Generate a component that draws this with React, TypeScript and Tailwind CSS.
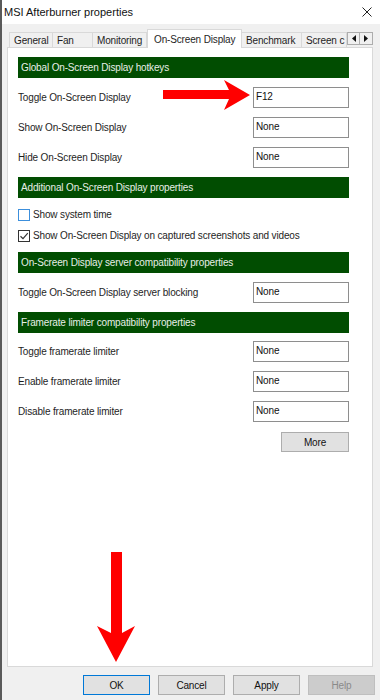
const hotkeys = [
  { label: "Toggle On-Screen Display", value: "F12" },
  { label: "Show On-Screen Display", value: "None" },
  { label: "Hide On-Screen Display", value: "None" },
];

const limiter = [
  { label: "Toggle framerate limiter", value: "None" },
  { label: "Enable framerate limiter", value: "None" },
  { label: "Disable framerate limiter", value: "None" },
];

const tabs = [
  { name: "General", cls: "w-[44px] border-l" },
  { name: "Fan", cls: "w-[40px]" },
  { name: "Monitoring", cls: "w-[54px]" },
  { name: "On-Screen Display", cls: "w-[95px]", active: true },
  { name: "Benchmark", cls: "w-[60px]" },
  // the tab label is cut by the scroll arrows in the original dialog
  { name: "Screen c", cls: "w-[45px]" },
];

function SectionHeader({ title, className = "" }: { title: string; className?: string }) {
  return (
    <div className={`flex h-[21px] items-center bg-[#014d01] pl-[3px] text-[#e8efe8] ${className}`}>
      {title}
    </div>
  );
}

function HotkeyRow({ label, value }: { label: string; value: string }) {
  return (
    <div className="flex h-[30px] items-center justify-between">
      <span>{label}</span>
      <div className="h-[21px] w-[96px] border border-[#8e8e8e] bg-white pl-[2px] pt-[2px] leading-[14px] text-[#111]">
        {value}
      </div>
    </div>
  );
}

function CheckRow({ label, checked }: { label: string; checked?: boolean }) {
  return (
    <div className="flex h-[21px] items-center">
      <div
        className={`flex h-[12px] w-[12px] items-center justify-center border bg-white ${
          checked ? "border-[#333]" : "border-[#3c8fdc]"
        }`}
      >
        {checked && (
          <svg width="10" height="10" viewBox="0 0 10 10">
            <path d="M1.5 5.2 L4 7.6 L8.8 2.2" fill="none" stroke="#333" strokeWidth="1.2" />
          </svg>
        )}
      </div>
      <span className="ml-[3px]">{label}</span>
    </div>
  );
}

function DlgButton({ label, primary, disabled }: { label: string; primary?: boolean; disabled?: boolean }) {
  return (
    <button
      className={`flex h-[20px] w-[67px] items-center justify-center border ${
        primary
          ? "border-[#0078d7] bg-[#e1e1e1] text-[#111]"
          : disabled
          ? "border-[#bfbfbf] bg-[#cccccc] text-[#8a8a8a]"
          : "border-[#adadad] bg-[#e1e1e1] text-[#111]"
      }`}
    >
      {label}
    </button>
  );
}

export default function App() {
  return (
    <div className="relative h-[700px] w-[380px] overflow-hidden border-l-2 border-[#5a5a5a] bg-[#f0f0f0] font-['Liberation_Sans',Arial,sans-serif] text-[10px] tracking-[-0.15px] text-[#1e1e1e]">
      {/* Title bar */}
      <div className="flex h-[24px] items-center justify-between bg-white pl-[2px] pr-[8px]">
        <span className="text-[11px] tracking-normal text-[#111]">MSI Afterburner properties</span>
        <svg width="10" height="10" viewBox="0 0 10 10">
          <path d="M0.5 0.5 L9.5 9.5 M9.5 0.5 L0.5 9.5" stroke="#222" strokeWidth="1" />
        </svg>
      </div>

      {/* Tabs */}
      <div className="mt-[5px] flex h-[18px] items-end pl-[7px]">
        {tabs.map((tab) =>
          tab.active ? (
            <div
              key={tab.name}
              className={`relative z-10 -mb-px flex h-[19px] items-center overflow-hidden whitespace-nowrap border border-b-0 border-[#d9d9d9] bg-white pl-[6px] ${tab.cls}`}
            >
              {tab.name}
            </div>
          ) : (
            <div
              key={tab.name}
              className={`flex h-[15px] items-center overflow-hidden whitespace-nowrap border-t border-r border-[#d9d9d9] bg-[#f0f0f0] pl-[4px] ${tab.cls}`}
            >
              {tab.name}
            </div>
          )
        )}
        <div className="mb-[2px] flex h-[13px]">
          <div className="flex w-[13px] items-center justify-center border border-[#adadad] bg-[#f0f0f0]">
            <svg width="4" height="7" viewBox="0 0 4 7">
              <polygon points="4,0 0,3.5 4,7" fill="#111" />
            </svg>
          </div>
          <div className="flex w-[13px] items-center justify-center border border-l-0 border-[#adadad] bg-[#f0f0f0]">
            <svg width="4" height="7" viewBox="0 0 4 7">
              <polygon points="0,0 4,3.5 0,7" fill="#111" />
            </svg>
          </div>
        </div>
      </div>

      {/* Panel */}
      <div className="ml-[5px] h-[620px] w-[366px] border border-[#d9d9d9] bg-white pl-[10px] pt-[9px]">
        <div className="w-[331px]">
          <SectionHeader title="Global On-Screen Display hotkeys" />
          <div className="mt-[4px]">
            {hotkeys.map((row) => (
              <HotkeyRow key={row.label} label={row.label} value={row.value} />
            ))}
          </div>

          <SectionHeader title="Additional On-Screen Display properties" className="mt-[5px]" />
          <div className="mt-[6px]">
            <CheckRow label="Show system time" />
            <CheckRow label="Show On-Screen Display on captured screenshots and videos" checked />
          </div>

          <SectionHeader title="On-Screen Display server compatibility properties" className="mt-[6px]" />
          <div className="mt-[4px]">
            <HotkeyRow label="Toggle On-Screen Display server blocking" value="None" />
          </div>

          <SectionHeader title="Framerate limiter compatibility properties" className="mt-[5px]" />
          <div className="mt-[3px]">
            {limiter.map((row) => (
              <HotkeyRow key={row.label} label={row.label} value={row.value} />
            ))}
          </div>

          <div className="mt-[6px] flex justify-end">
            <button className="flex h-[20px] w-[68px] items-center justify-center border border-[#adadad] bg-[#e1e1e1] text-[#111]">
              More
            </button>
          </div>
        </div>
      </div>

      {/* Dialog buttons */}
      <div className="ml-[81px] mt-[8px] flex gap-[8px]">
        <DlgButton label="OK" primary />
        <DlgButton label="Cancel" />
        <DlgButton label="Apply" />
        <DlgButton label="Help" disabled />
      </div>

      {/* Annotation arrows */}
      <svg className="absolute left-0 top-0" width="380" height="700" viewBox="0 0 380 700">
        <polygon points="161,90 227,90 222,80 248,95 222,110 227,99 161,99" fill="#ff0000" />
        <polygon points="109,552 120,552 120,633 133,626 114,662 95,626 109,633" fill="#ff0000" />
      </svg>
    </div>
  );
}
